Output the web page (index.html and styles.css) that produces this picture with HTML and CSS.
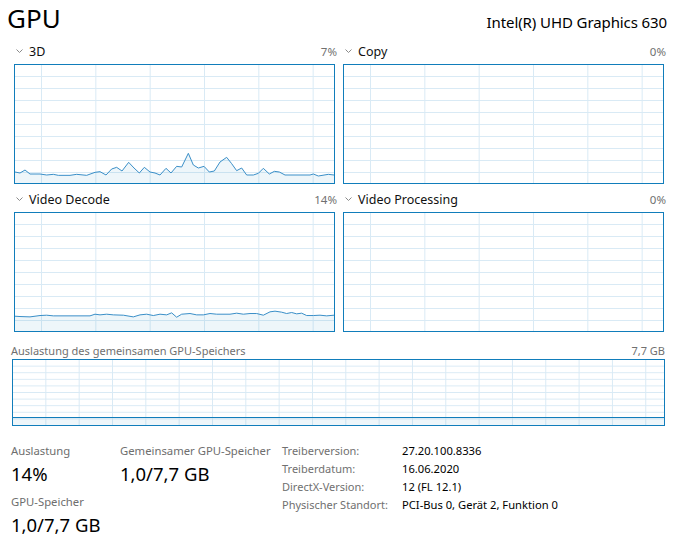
FILE: index.html
```html
<!DOCTYPE html>
<html lang="de">
<head>
<meta charset="utf-8">
<title>GPU</title>
<link rel="stylesheet" href="styles.css">
</head>
<body>
<div class="page">
  <header class="top">
    <h1 class="title">GPU</h1>
    <div class="device">Intel(R) UHD Graphics 630</div>
  </header>

  <section class="graphs">
    <div class="cell">
      <div class="head">
        <svg class="chev" width="7" height="4" viewBox="0 0 7 4"><polyline points="0.5,0.5 3.5,3.5 6.5,0.5" fill="none" stroke="#8a8a8a" stroke-width="1"/></svg>
        <span class="name">3D</span>
        <span class="pct">7%</span>
      </div>
      <div class="graph">
        <svg class="data" viewBox="45 16 957 354" preserveAspectRatio="none">
          <polygon class="area" points="45,337 60,340 75,331 90,343 120,343 140,346 160,344 175,347 210,347 230,344 260,347 285,338 300,336 318,346 335,328 350,323 366,334 386,308 402,325 418,340 433,323 450,337 465,340 480,346 498,326 513,340 530,320 545,322 565,281 580,316 595,325 612,320 628,337 643,334 660,307 680,293 695,312 710,333 725,325 740,346 760,346 775,341 790,326 808,343 823,335 838,337 855,346 930,346 940,343 955,349 985,344 1002,346 1002,370 45,370"/>
          <polyline class="line" points="45,337 60,340 75,331 90,343 120,343 140,346 160,344 175,347 210,347 230,344 260,347 285,338 300,336 318,346 335,328 350,323 366,334 386,308 402,325 418,340 433,323 450,337 465,340 480,346 498,326 513,340 530,320 545,322 565,281 580,316 595,325 612,320 628,337 643,334 660,307 680,293 695,312 710,333 725,325 740,346 760,346 775,341 790,326 808,343 823,335 838,337 855,346 930,346 940,343 955,349 985,344 1002,346"/>
        </svg>
      </div>
    </div>

    <div class="cell">
      <div class="head">
        <svg class="chev" width="7" height="4" viewBox="0 0 7 4"><polyline points="0.5,0.5 3.5,3.5 6.5,0.5" fill="none" stroke="#8a8a8a" stroke-width="1"/></svg>
        <span class="name">Copy</span>
        <span class="pct">0%</span>
      </div>
      <div class="graph"></div>
    </div>

    <div class="cell">
      <div class="head">
        <svg class="chev" width="7" height="4" viewBox="0 0 7 4"><polyline points="0.5,0.5 3.5,3.5 6.5,0.5" fill="none" stroke="#8a8a8a" stroke-width="1"/></svg>
        <span class="name">Video Decode</span>
        <span class="pct">14%</span>
      </div>
      <div class="graph">
        <svg class="data" viewBox="45 100 957 351" preserveAspectRatio="none">
          <polygon class="area" points="45,407 60,408 90,409 120,405 140,404 160,406 270,406 285,401 300,403 320,401 340,403 370,404 400,409 420,403 440,401 460,405 480,401 500,403 515,397 530,410 545,401 570,399 590,403 610,403 630,399 650,401 690,401 710,398 730,401 750,399 770,399 790,404 810,394 825,392 845,395 860,399 875,396 890,400 905,398 920,405 940,405 960,404 980,406 1002,404 1002,451 45,451"/>
          <polyline class="line" points="45,407 60,408 90,409 120,405 140,404 160,406 270,406 285,401 300,403 320,401 340,403 370,404 400,409 420,403 440,401 460,405 480,401 500,403 515,397 530,410 545,401 570,399 590,403 610,403 630,399 650,401 690,401 710,398 730,401 750,399 770,399 790,404 810,394 825,392 845,395 860,399 875,396 890,400 905,398 920,405 940,405 960,404 980,406 1002,404"/>
        </svg>
      </div>
    </div>

    <div class="cell">
      <div class="head">
        <svg class="chev" width="7" height="4" viewBox="0 0 7 4"><polyline points="0.5,0.5 3.5,3.5 6.5,0.5" fill="none" stroke="#8a8a8a" stroke-width="1"/></svg>
        <span class="name">Video Processing</span>
        <span class="pct">0%</span>
      </div>
      <div class="graph"></div>
    </div>
  </section>

  <section class="shared">
    <div class="shared-head">
      <span>Auslastung des gemeinsamen GPU-Speichers</span>
      <span>7,7 GB</span>
    </div>
    <div class="shared-graph">
      <div class="shared-fill"></div>
    </div>
  </section>

  <section class="stats">
    <div class="col col1">
      <div class="label">Auslastung</div>
      <div class="value">14%</div>
      <div class="label gap">GPU-Speicher</div>
      <div class="value">1,0/7,7 GB</div>
    </div>
    <div class="col col2">
      <div class="label">Gemeinsamer GPU-Speicher</div>
      <div class="value">1,0/7,7 GB</div>
    </div>
    <div class="col props">
      <div class="k">Treiberversion:</div><div class="v">27.20.100.8336</div>
      <div class="k">Treiberdatum:</div><div class="v">16.06.2020</div>
      <div class="k">DirectX-Version:</div><div class="v">12 (FL 12.1)</div>
      <div class="k">Physischer Standort:</div><div class="v">PCI-Bus 0, Gerät 2, Funktion 0</div>
    </div>
  </section>
</div>
</body>
</html>
```

FILE: styles.css
```css
* { box-sizing: border-box; }

html, body {
  margin: 0;
  padding: 0;
  background: #ffffff;
}

body {
  font-family: "Segoe UI", "Noto Sans", "Open Sans", sans-serif;
  color: #000000;
  width: 675px;
  height: 541px;
  overflow: hidden;
}

.page {
  display: flex;
  flex-direction: column;
}

/* title row */
.top {
  height: 36px;
  display: flex;
  justify-content: space-between;
  align-items: baseline;
  padding: 0 8px 0 7px;
}

.title {
  margin: 5px 0 0 0;
  font-size: 26px;
  font-weight: 400;
  line-height: 26px;
  letter-spacing: 0;
}

.device {
  font-size: 15px;
  line-height: 20px;
  letter-spacing: -0.1px;
}

/* graph grid */
.graphs {
  display: grid;
  grid-template-columns: 321px 321px;
  column-gap: 8px;
  padding-left: 14px;
}

.cell {
  display: flex;
  flex-direction: column;
}

.head {
  height: 28px;
  display: flex;
  align-items: center;
  margin-right: -2px;
  font-size: 12.5px;
  padding-top: 2px;
}

.chev {
  margin: 0 6px 0 2px;
  flex: none;
}

.name {
  flex: 1;
  color: #111111;
}

.pct {
  color: #707070;
  font-size: 11.5px;
}

.graph {
  height: 120px;
  border: 1px solid #117dbb;
  background-color: #ffffff;
  background-image:
    linear-gradient(to right, transparent calc(100% - 1px), #d9eaf5 0),
    linear-gradient(to bottom, transparent 11px, #d9eaf5 0);
  background-size: 54.33px 100%, 100% 12px;
  background-position: -27.33px 0, 0 0;
}

.data {
  display: block;
  width: 100%;
  height: 100%;
}

.area {
  fill: rgba(17, 125, 187, 0.07);
  stroke: none;
}

.line {
  fill: none;
  stroke: #3a8fc8;
  stroke-width: 1;
  vector-effect: non-scaling-stroke;
  stroke-linejoin: round;
}

/* shared memory */
.shared {
  padding: 0 10px 0 11px;
  display: flex;
  flex-direction: column;
}

.shared-head {
  height: 27px;
  display: flex;
  justify-content: space-between;
  align-items: center;
  padding-top: 9px;
  font-size: 11px;
  color: #707070;
}

.shared-graph {
  margin-left: 1px;
  height: 67px;
  border: 1px solid #117dbb;
  background-image:
    linear-gradient(to right, transparent calc(100% - 1px), #d9eaf5 0),
    linear-gradient(to bottom, transparent calc(100% - 1px), #d9eaf5 0);
  background-size: 33.33px 100%, 100% 6.6px;
  background-position: 0 0, 0 0;
}

.shared-fill {
  margin-top: 57px;
  height: 8px;
  border-top: 1px solid #117dbb;
  background: rgba(17, 125, 187, 0.07);
}

/* stats */
.stats {
  display: flex;
  padding: 17px 0 0 11px;
}

.col1 { width: 109px; }
.col2 { width: 162px; }

.label {
  font-size: 11.3px;
  line-height: 16px;
  color: #6e6e6e;
}

.label.gap { margin-top: 8px; }

.value {
  margin-top: 3px;
  font-size: 18.5px;
  line-height: 24px;
  color: #000000;
}

.props {
  display: grid;
  grid-template-columns: 120px auto;
  grid-auto-rows: 18px;
  align-items: center;
  margin-top: -2px;
  font-size: 11px;
}

.props .k { color: #707070; }
.props .v { color: #000000; font-size: 11.2px; }
```
